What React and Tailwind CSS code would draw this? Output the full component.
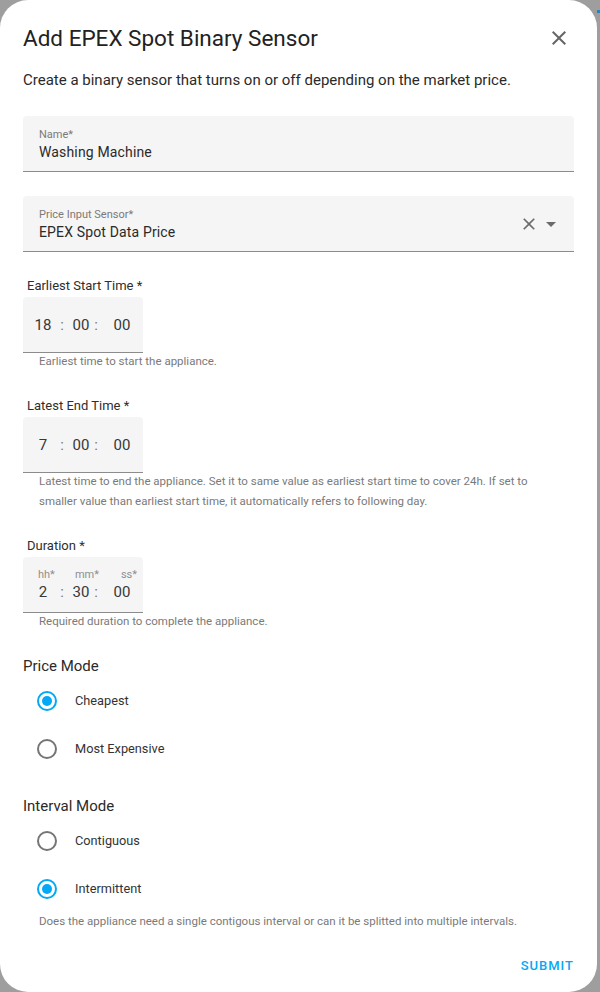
import React from 'react';

const font = { fontFamily: 'Roboto, "Noto Sans", sans-serif' };

const CloseIcon = ({ size = 24, className = '' }) => (
  <svg width={size} height={size} viewBox="0 0 24 24" className={className}>
    <path
      fill="currentColor"
      d="M19,6.41L17.59,5L12,10.59L6.41,5L5,6.41L10.59,12L5,17.59L6.41,19L12,13.41L17.59,19L19,17.59L13.41,12L19,6.41Z"
    />
  </svg>
);

const MenuDown = ({ size = 24, className = '' }) => (
  <svg width={size} height={size} viewBox="0 0 24 24" className={className}>
    <path fill="currentColor" d="M7,10L12,15L17,10H7Z" />
  </svg>
);

// filled text field with floating label
const TextField = ({ label, value, children }) => (
  <div className="h-[56px] bg-[#f5f5f5] rounded-t-[4px] border-b border-[#8c8c8c] flex items-center pl-4 pr-[11px]">
    <div className="flex-1 flex flex-col">
      <span className="text-[11px] leading-[14px] text-[#7a7a7a] mt-[3px]">{label}</span>
      <span className="text-[14px] leading-[20px] tracking-[0.15px] text-[#2a2a2a]">{value}</span>
    </div>
    {children}
  </div>
);

const TimeField = ({ label, values, helper, units }) => (
  <div className="flex flex-col">
    <span className="text-[13px] leading-[16px] text-[#2e2e2e] pl-1">{label}</span>
    <div className="mt-[3px] w-[120px] h-[56px] bg-[#f5f5f5] rounded-t-[4px] border-b border-[#8c8c8c] flex flex-col justify-center pl-[10px] text-[#383838]">
      {units && (
        <div className="flex text-[11px] leading-[14px] text-[#8f8f8f] mt-[1px]">
          <span className="w-[20px] text-center pl-[5px]">{units[0]}</span>
          <span className="w-[18px]" />
          <span className="w-[28px] text-right">{units[1]}</span>
          <span className="w-[4px]" />
          <span className="w-[34px] text-right">{units[2]}</span>
        </div>
      )}
      <div className="flex text-[15px] leading-[20px]">
        <span className="w-[20px] text-center">{values[0]}</span>
        <span className="w-[18px] text-center text-[#757575]">:</span>
        <span className="w-[20px] text-center">{values[1]}</span>
        <span className="w-[10px] text-center text-[#757575]">:</span>
        <span className="w-[42px] text-center">{values[2]}</span>
      </div>
    </div>
    <div className="mt-[-2px] pl-4 text-[11.5px] leading-[20px] text-[#7a7a7a]">{helper}</div>
  </div>
);

const Radio = ({ label, checked }) => (
  <div className="h-[48px] flex items-center pl-[14px]">
    <span
      className={`w-[20px] h-[20px] rounded-full border-2 flex items-center justify-center ${
        checked ? 'border-[#03a9f4]' : 'border-[#757575]'
      }`}
    >
      {checked && <span className="w-[10px] h-[10px] rounded-full bg-[#03a9f4]" />}
    </span>
    <span className="ml-[18px] text-[12.75px] text-[#333]">{label}</span>
  </div>
);

export default function App() {
  return (
    <div className="w-[600px] h-[992px] bg-[#9e9e9e] flex overflow-hidden" style={font}>
      <div className="w-[597px] h-[992px] bg-white rounded-[28px] flex flex-col px-[23px]">
        <div className="flex items-center justify-between pt-6">
          <h1 className="text-[22.5px] leading-[28px] text-[#222]">Add EPEX Spot Binary Sensor</h1>
          <CloseIcon className="text-[#666] mr-[3px]" />
        </div>
        <p className="mt-[18px] text-[15px] leading-[20px] text-[#2a2a2a]">
          Create a binary sensor that turns on or off depending on the market price.
        </p>

        <div className="mt-[26px]">
          <TextField label="Name*" value="Washing Machine" />
        </div>
        <div className="mt-[24px]">
          <TextField label="Price Input Sensor*" value="EPEX Spot Data Price">
            <CloseIcon size={20} className="text-[#6b6b6b]" />
            <MenuDown size={24} className="text-[#6b6b6b]" />
          </TextField>
        </div>

        <div className="mt-[26px]">
          <TimeField
            label="Earliest Start Time *"
            values={['18', '00', '00']}
            helper="Earliest time to start the appliance."
          />
        </div>
        <div className="mt-[27px]">
          <TimeField
            label="Latest End Time *"
            values={['7', '00', '00']}
            helper={
              <>
                Latest time to end the appliance. Set it to same value as earliest start time to cover 24h. If set to
                <br />
                smaller value than earliest start time, it automatically refers to following day.
              </>
            }
          />
        </div>
        <div className="mt-[27px]">
          <TimeField
            label="Duration *"
            units={['hh*', 'mm*', 'ss*']}
            values={['2', '30', '00']}
            helper="Required duration to complete the appliance."
          />
        </div>

        <div className="mt-[25px] mb-[1px] text-[15px] leading-[20px] text-[#2a2a2a]">Price Mode</div>
        <Radio label="Cheapest" checked />
        <Radio label="Most Expensive" />

        <div className="mt-[23px] mb-[1px] text-[15px] leading-[20px] text-[#2a2a2a]">Interval Mode</div>
        <Radio label="Contiguous" />
        <Radio label="Intermittent" checked />
        <div className="pl-4 text-[11.5px] leading-[16px] text-[#7a7a7a]">
          Does the appliance need a single contigous interval or can it be splitted into multiple intervals.
        </div>

        <div className="mt-[19px] flex justify-end">
          <button className="h-[36px] px-2 mr-[-8px] text-[13px] font-medium tracking-[1px] text-[#03a9f4]">
            SUBMIT
          </button>
        </div>
      </div>
      <div className="w-[3px] flex flex-col">
        <div className="h-[10px]" />
        <div className="h-[3px] bg-[#1e88c7]" />
      </div>
    </div>
  );
}
